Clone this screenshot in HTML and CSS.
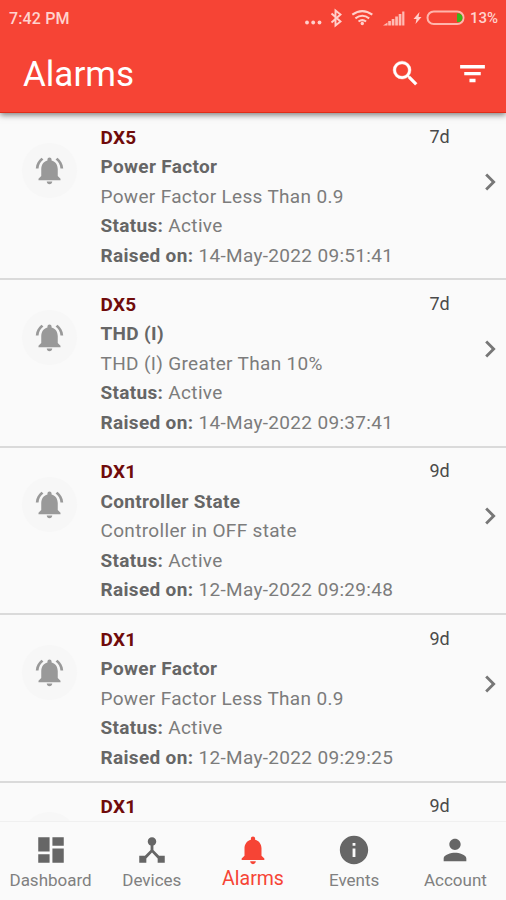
FILE: index.html
```html
<!DOCTYPE html>
<html lang="en">
<head>
<meta charset="utf-8">
<title>Alarms</title>
<link rel="stylesheet" href="styles.css">
</head>
<body>
<svg class="defs" width="0" height="0">
  <symbol id="ringing" viewBox="0 0 24 24"><path d="M7.58 4.08L6.15 2.65C3.75 4.48 2.17 7.3 2.03 10.5h2c.15-2.65 1.51-4.97 3.55-6.42zM19.97 10.5h2c-.15-3.2-1.73-6.02-4.12-7.85l-1.42 1.43c2.02 1.45 3.39 3.77 3.54 6.42zM18 11c0-3.07-1.64-5.64-4.5-6.32V4c0-.83-.67-1.5-1.5-1.5s-1.5.67-1.5 1.5v.68C7.63 5.36 6 7.92 6 11v5l-2 2v1h16v-1l-2-2v-5zM12 22c1.1 0 2-.9 2-2h-4c0 1.1.9 2 2 2z"/></symbol>
  <symbol id="chevron" viewBox="0 0 24 24"><path d="M10 6L8.590 7.410 13.170 12l-4.580 4.590L10 18l6-6z"/></symbol>
</svg>
<div class="screen">
  <header class="appbar">
    <div class="statusbar">
      <span class="clock">7:42 PM</span>
      <svg class="indicators" width="165" height="24" viewBox="0 0 165 24">
        <g fill="#ffd0cb"><circle cx="3" cy="16.500" r="1.900"/><circle cx="9.200" cy="16.500" r="1.900"/><circle cx="15.500" cy="16.500" r="1.900"/></g>
        <path d="M27.500 7.500l9 8-5 4V4.500l5 4-9 8" fill="none" stroke="#ffd0cb" stroke-width="1.900"/>
        <g fill="none" stroke="#ffd0cb" stroke-width="2.100"><path d="M48.300 8.700q10-7.200 20 0M51.400 12.300q6.900-5 13.800 0M54.500 15.500q3.800-2.800 7.600 0"/></g>
        <circle cx="58.300" cy="17.500" r="1.700" fill="#ffd0cb"/>
        <path d="M79 19.500l4.500-3v3zM84.200 15h2.700v4.500h-2.700zM87.700 13h2.700v6.500h-2.700zM91.200 10.500h2.700v9h-2.700zM94.700 8h2.700v11.500h-2.700zM98.200 5.500h2.200v14h-2.200z" fill="#ffbbb3"/>
        <path d="M115.500 6l-6 7h3l-1 5 6-7h-3z" fill="#ffd0cb"/>
        <rect x="123.500" y="5.500" width="36" height="12.500" rx="6.250" fill="none" stroke="#ffb5ac" stroke-width="2"/>
        <path d="M153 7.600h2.500q3 1.200 3 4.200t-3 4.200H153z" fill="#39b51c"/>
      </svg>
      <span class="percent">13%</span>
    </div>
    <div class="toolbar">
      <h1>Alarms</h1>
      <svg class="tool" viewBox="0 0 24 24"><path d="M15.500 14h-.79l-.28-.27A6.471 6.471 0 0 0 16 9.500 6.500 6.500 0 1 0 9.500 16c1.610 0 3.090-.59 4.230-1.570l.27.28v.79l5 4.990L20.490 19l-4.990-5zm-6 0C7.010 14 5 11.990 5 9.500S7.010 5 9.500 5 14 7.010 14 9.500 11.990 14 9.500 14z" stroke="#fff" stroke-width=".3"/></svg>
      <svg class="tool" viewBox="0 0 24 24"><path d="M9.800 18.300h4.400v-2.400H9.800v2.400zM3 5.900v2.500h18V5.900H3zm3 7.400h12v-2.400H6v2.400z"/></svg>
    </div>
  </header>
  <main class="list">
    <article class="alarm">
      <div class="avatar"><svg viewBox="0 0 24 24"><use href="#ringing"/></svg></div>
      <div class="details"><p class="device">DX5</p><p class="strong">Power Factor</p><p>Power Factor Less Than 0.9</p><p><b>Status:</b> Active</p><p><b>Raised on:</b> 14-May-2022 09:51:41</p></div>
      <span class="age">7d</span>
      <svg class="chevron" viewBox="0 0 24 24"><use href="#chevron"/></svg>
    </article>
    <article class="alarm">
      <div class="avatar"><svg viewBox="0 0 24 24"><use href="#ringing"/></svg></div>
      <div class="details"><p class="device">DX5</p><p class="strong">THD (I)</p><p>THD (I) Greater Than 10%</p><p><b>Status:</b> Active</p><p><b>Raised on:</b> 14-May-2022 09:37:41</p></div>
      <span class="age">7d</span>
      <svg class="chevron" viewBox="0 0 24 24"><use href="#chevron"/></svg>
    </article>
    <article class="alarm">
      <div class="avatar"><svg viewBox="0 0 24 24"><use href="#ringing"/></svg></div>
      <div class="details"><p class="device">DX1</p><p class="strong">Controller State</p><p>Controller in OFF state</p><p><b>Status:</b> Active</p><p><b>Raised on:</b> 12-May-2022 09:29:48</p></div>
      <span class="age">9d</span>
      <svg class="chevron" viewBox="0 0 24 24"><use href="#chevron"/></svg>
    </article>
    <article class="alarm">
      <div class="avatar"><svg viewBox="0 0 24 24"><use href="#ringing"/></svg></div>
      <div class="details"><p class="device">DX1</p><p class="strong">Power Factor</p><p>Power Factor Less Than 0.9</p><p><b>Status:</b> Active</p><p><b>Raised on:</b> 12-May-2022 09:29:25</p></div>
      <span class="age">9d</span>
      <svg class="chevron" viewBox="0 0 24 24"><use href="#chevron"/></svg>
    </article>
    <article class="alarm">
      <div class="avatar"></div>
      <div class="details"><p class="device">DX1</p></div>
      <span class="age">9d</span>
    </article>
  </main>
  <nav class="tabs">
    <a class="tab"><svg viewBox="0 0 24 24"><path d="M3 13h8V3H3v10zm0 8h8v-6H3v6zm10 0h8V11h-8v10zm0-18v6h8V3h-8z"/></svg><span>Dashboard</span></a>
    <a class="tab"><svg viewBox="0 0 24 24"><path d="M17 16l-4-4V8.820C14.160 8.400 15 7.300 15 6c0-1.660-1.340-3-3-3S9 4.340 9 6c0 1.300.84 2.400 2 2.820V12l-4 4H3v5h5v-3.050l4-4.200 4 4.200V21h5v-5h-4z"/></svg><span>Devices</span></a>
    <a class="tab active"><svg viewBox="0 0 24 24"><path d="M12 22c1.100 0 2-.9 2-2h-4c0 1.100.9 2 2 2zm6-6v-5c0-3.070-1.630-5.640-4.500-6.320V4c0-.83-.67-1.500-1.500-1.500s-1.500.67-1.500 1.500v.68C7.640 5.360 6 7.920 6 11v5l-2 2v1h16v-1l-2-2z"/></svg><span>Alarms</span></a>
    <a class="tab"><svg viewBox="0 0 24 24"><path d="M12 2C6.480 2 2 6.480 2 12s4.480 10 10 10 10-4.480 10-10S17.520 2 12 2zm1 15h-2v-6h2v6zm0-8h-2V7h2v2z"/></svg><span>Events</span></a>
    <a class="tab"><svg viewBox="0 0 24 24"><path d="M12 12c2.210 0 4-1.790 4-4s-1.790-4-4-4-4 1.790-4 4 1.790 4 4 4zm0 2c-2.670 0-8 1.340-8 4v2h16v-2c0-2.660-5.330-4-8-4z"/></svg><span>Account</span></a>
  </nav>
</div>
</body>
</html>
```
FILE: styles.css
```css
* { box-sizing: border-box; }
body { margin: 0; font-family: Roboto, sans-serif; background: #fafafa; }
.defs { display: block; }
p, h1 { margin: 0; }
svg { display: block; flex: none; }

.screen { height: 900px; display: flex; flex-direction: column; overflow: hidden; }

.appbar {
  flex: none;
  height: 113px;
  background: #f64435;
  border-bottom: 1px solid #e02d19;
  box-shadow: 0 2px 6px rgba(0, 0, 0, .5);
  position: relative;
  z-index: 1;
}
.statusbar { display: flex; height: 36px; padding: 6px 8px 0 9px; color: #ffd3ce; font-weight: 500; line-height: 25px; }
.clock { flex: 1; font-size: 16px; letter-spacing: .15px; }
.indicators { margin-right: 1px; }
.percent { font-size: 15px; width: 28px; white-space: nowrap; }
.toolbar { display: flex; align-items: center; height: 74px; padding: 0 17px 0 23px; }
.toolbar h1 { flex: 1; color: #fff; font-size: 35px; line-height: 42px; font-weight: 400; padding-top: 3px; }
.tool { width: 33px; height: 33px; fill: #fff; }
.tool + .tool { margin-left: 34px; }

.list { flex: 1; min-height: 0; overflow: hidden; }
.alarm {
  display: grid;
  grid-template-columns: 55px 352.500px 21.500px 32px;
  height: 167.4px;
  padding: 9.500px 0 0 22px;
  border-bottom: 2px solid #dadada;
}
.details { padding-left: 23.500px; color: #7c7c7c; font-size: 19px; line-height: 29.500px; letter-spacing: .33px; white-space: nowrap; }
.details b, .strong { font-weight: 700; color: #666; }
.details .device { font-weight: 700; color: #700b0b; }
.avatar { width: 55px; height: 55px; margin-top: 20px; border-radius: 50%; background: #f7f7f7; display: flex; align-items: center; justify-content: center; }
.avatar svg { width: 33px; height: 33px; fill: #999; }
.age { color: #4a4a4a; font-size: 18px; line-height: 27px; }
.chevron { width: 34px; height: 34px; margin: 42px 0 0 22px; fill: #777; }

.tabs { flex: none; display: grid; grid-template-columns: repeat(5, 1fr); height: 79px; background: #fafafa; border-top: 1px solid #f0f0f0; }
.tab { display: flex; flex-direction: column; align-items: center; padding-top: 11px; color: #808080; font-size: 17px; line-height: 24px; }
.tab svg { width: 34px; height: 34px; fill: #666; }
.tab span { margin-top: 1px; }
.active { color: #f64435; font-size: 19.500px; }
.active svg { fill: #f64435; }
.active span { margin-top: 0; }
```
